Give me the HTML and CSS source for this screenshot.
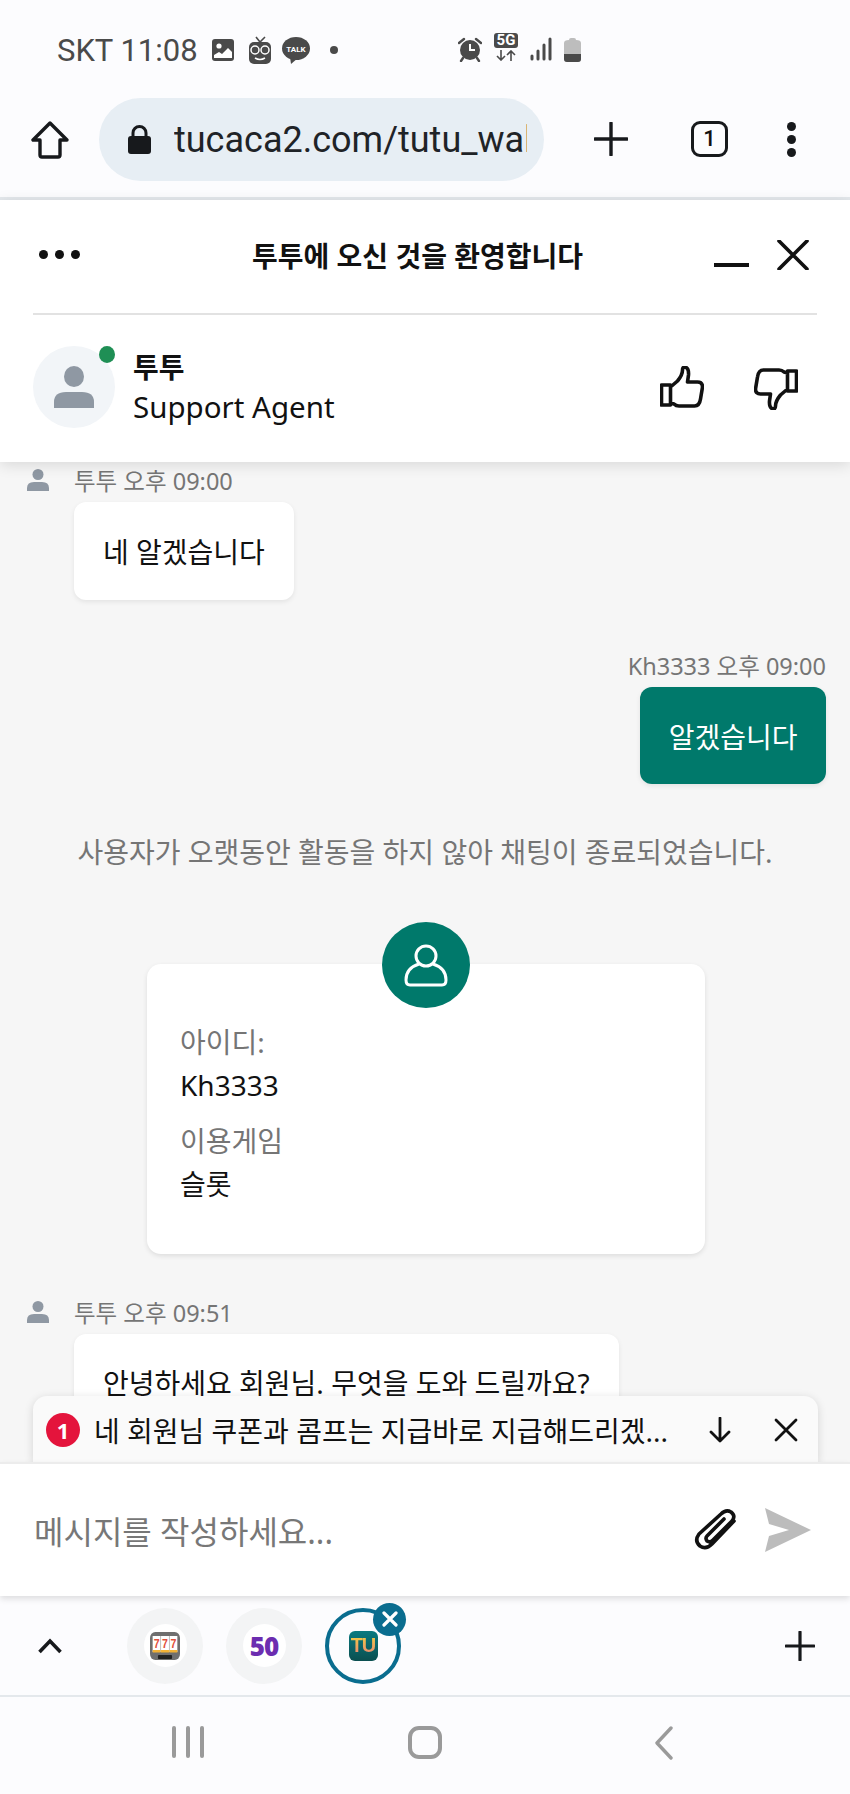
FILE: index.html
```html
<!DOCTYPE html>
<html lang="ko">
<head>
  <meta charset="UTF-8" />
  <meta name="viewport" content="width=device-width, initial-scale=1" />
  <title>투투 채팅</title>
  <link rel="stylesheet" href="styles.css">
</head>
<body>
  <div class="phone">
    <!-- status bar -->
    <div class="statusbar">
      <div class="status-left">
        <span class="clock">SKT 11:08</span>
        <svg class="st-photo" width="24" height="24" viewBox="0 0 24 24"><rect x="1" y="1" width="22" height="22" rx="3" fill="#4a4a4a"/><circle cx="8" cy="8" r="2.6" fill="#fff"/><path d="M3 20v-3l5-3 3 2 6-6 4 4v6z" fill="#fff"/></svg>
        <svg width="24" height="28" viewBox="0 0 24 28"><path d="M8 1l4 5 5-5" fill="none" stroke="#4a4a4a" stroke-width="1.6"/><rect x="1" y="6" width="22" height="22" rx="5" fill="#4a4a4a"/><circle cx="7" cy="14" r="4" fill="none" stroke="#fff" stroke-width="1.5"/><circle cx="17" cy="14" r="4" fill="none" stroke="#fff" stroke-width="1.5"/><path d="M7 22q5 3 10 0" fill="none" stroke="#fff" stroke-width="1.5"/></svg>
        <svg width="28" height="27" viewBox="0 0 28 27"><ellipse cx="14" cy="11.5" rx="14" ry="11.5" fill="#4a4a4a"/><path d="M8 20l1 7 7-6z" fill="#4a4a4a"/><text class="talk" x="14" y="15" text-anchor="middle">TALK</text></svg>
        <span class="st-dot"></span>
      </div>
      <div class="status-right">
        <svg width="24" height="25" viewBox="0 0 24 25"><path d="M1 6l5-4M23 6l-5-4" stroke="#4a4a4a" stroke-width="2.4" stroke-linecap="round"/><path d="M5 21l-2 3M19 21l2 3" stroke="#4a4a4a" stroke-width="2.4" stroke-linecap="round"/><circle cx="12" cy="13" r="10" fill="#4a4a4a"/><path d="M12 7v6h5" fill="none" stroke="#fff" stroke-width="2"/></svg>
        <div class="fiveg">
          <span class="fiveg-label">5G</span>
          <svg width="22" height="11" viewBox="0 0 22 11"><path d="M6 0v10M2 6l4 4 4-4M16 11V1M12 5l4-4 4 4" fill="none" stroke="#4a4a4a" stroke-width="1.6"/></svg>
        </div>
        <svg width="22" height="24" viewBox="0 0 22 24"><g stroke="#4a4a4a" stroke-width="3" stroke-linecap="round"><path d="M2 19v3"/><path d="M8 14v8"/><path d="M14 8v14"/><path d="M20 2v20"/></g></svg>
        <svg width="17" height="25" viewBox="0 0 17 25"><path d="M5 3q0-2 2-2h3q2 0 2 2q5 0 5 3v16q0 3-3 3H3q-3 0-3-3V6q0-3 5-3z" fill="#bdbdbd"/><path d="M0 17h17v5q0 3-3 3H3q-3 0-3-3z" fill="#4a4a4a"/></svg>
      </div>
    </div>

    <!-- browser toolbar -->
    <div class="toolbar">
      <svg class="home" width="38" height="38" viewBox="0 0 38 38"><path d="M19 2L2 19h7v15q0 2 2 2h16q2 0 2-2V19h7z" fill="none" stroke="#17191c" stroke-width="3.4" stroke-linejoin="round"/></svg>
      <div class="urlbar">
        <svg class="lock" width="23" height="29" viewBox="0 0 23 29"><path d="M5 12V8a6.5 6.5 0 0113 0v4" fill="none" stroke="#17191c" stroke-width="3"/><rect y="11" width="23" height="18" rx="3" fill="#17191c"/></svg>
        <span class="url">tucaca2.com/tutu_wal</span>
      </div>
      <svg class="tb-plus" width="34" height="34" viewBox="0 0 34 34"><path d="M17 1v32M1 17h32" stroke="#17191c" stroke-width="3.4" stroke-linecap="round"/></svg>
      <span class="tabcount">1</span>
      <span class="kebab"><i></i><i></i><i></i></span>
    </div>

    <!-- chat header -->
    <header class="chat-head">
      <div class="title-row">
        <span class="dots"><i></i><i></i><i></i></span>
        <h1 class="title">투투에 오신 것을 환영합니다</h1>
        <span class="minimize"></span>
        <svg class="close" width="32" height="30" viewBox="0 0 32 30"><path d="M2 1l28 28M30 1L2 29" stroke="#111" stroke-width="3.6" stroke-linecap="round"/></svg>
      </div>
      <div class="agent-row">
        <div class="avatar">
          <svg width="42" height="42" viewBox="0 0 42 42"><ellipse cx="21" cy="10.5" rx="10" ry="10.5" fill="#8f98a3"/><path d="M1 42v-6q0-10 12-10h16q12 0 12 10v6z" fill="#8f98a3"/></svg>
          <span class="online"></span>
        </div>
        <div class="agent-info">
          <strong>투투</strong>
          <span>Support Agent</span>
        </div>
        <svg class="thumb" width="44" height="42" viewBox="0 0 44 42"><path d="M1.500 19h9v20h-9zM10.500 21l7-6q5-6 5-11q0-3 2.500-3q4 1 3.500 8l-1 7h10q5 0 5 5l-2 12q-1 7-6 7H19q-3 0-5-2l-3.500-1" fill="none" stroke="#111" stroke-width="3.6" stroke-linejoin="round"/></svg>
        <svg class="thumb thumb-down" width="44" height="42" viewBox="0 0 44 42"><path d="M42.500 23h-9V3h9zM33.500 21l-7 6q-5 6-5 11q0 3-2.500 3q-4-1-3.500-8l1-7H6.500q-5 0-5-5l2-12q1-7 6-7H25q3 0 5 2l3.500 1" fill="none" stroke="#111" stroke-width="3.6" stroke-linejoin="round"/></svg>
      </div>
    </header>

    <!-- messages -->
    <main class="chat-body">
      <div class="msg">
        <div class="meta">
          <svg width="24" height="22" viewBox="0 0 24 22"><ellipse cx="12" cy="5.5" rx="5.5" ry="5.5" fill="#8f98a3"/><path d="M1 22v-3q0-6 7-6h8q7 0 7 6v3z" fill="#8f98a3"/></svg>
          <span>투투 오후 09:00</span>
        </div>
        <div class="bubble">네 알겠습니다</div>
      </div>

      <div class="msg msg-mine">
        <div class="meta"><span>Kh3333 오후 09:00</span></div>
        <div class="bubble">알겠습니다</div>
      </div>

      <p class="notice">사용자가 오랫동안 활동을 하지 않아 채팅이 종료되었습니다.</p>

      <section class="info-card">
        <span class="info-icon">
          <svg width="44" height="44" viewBox="0 0 44 44"><circle cx="22" cy="13" r="10" fill="none" stroke="#fff" stroke-width="3"/><path d="M15 21q-13 4-13 16q0 5 4 5h32q4 0 4-5q0-12-13-16" fill="none" stroke="#fff" stroke-width="3" stroke-linejoin="round"/></svg>
        </span>
        <dl class="info-list">
          <dt>아이디:</dt>
          <dd>Kh3333</dd>
          <dt>이용게임</dt>
          <dd>슬롯</dd>
        </dl>
      </section>

      <div class="msg msg-last">
        <div class="meta">
          <svg width="24" height="22" viewBox="0 0 24 22"><ellipse cx="12" cy="5.5" rx="5.5" ry="5.5" fill="#8f98a3"/><path d="M1 22v-3q0-6 7-6h8q7 0 7 6v3z" fill="#8f98a3"/></svg>
          <span>투투 오후 09:51</span>
        </div>
        <div class="bubble">안녕하세요 회원님. 무엇을 도와 드릴까요?</div>
      </div>

      <!-- unread strip sits over the last messages -->
      <div class="unread">
        <span class="unread-count">1</span>
        <span class="unread-text">네 회원님 쿠폰과 콤프는 지급바로 지급해드리겠...</span>
        <svg width="24" height="26" viewBox="0 0 24 26"><path d="M12 1v23M3 15l9 9 9-9" fill="none" stroke="#111" stroke-width="2.8" stroke-linecap="round" stroke-linejoin="round"/></svg>
        <svg width="24" height="24" viewBox="0 0 24 24"><path d="M2 2l20 20M22 2L2 22" stroke="#111" stroke-width="2.8" stroke-linecap="round"/></svg>
      </div>
    </main>

    <!-- message input -->
    <div class="composer">
      <span class="placeholder">메시지를 작성하세요...</span>
      <svg class="clip" width="46" height="44" viewBox="0 0 46 44"><path d="M41 13L19 36q-6 6-12 2q-6-5-1-12L28 6q5-5 10-2q5 4 1 9L20 32q-3 3-6 1q-2-3 0-5l17-17" fill="none" stroke="#111" stroke-width="3.6" stroke-linecap="round" stroke-linejoin="round"/></svg>
      <svg class="send" width="48" height="44" viewBox="0 0 48 44"><path d="M2 0l46 22L2 44l4-16 20-6L6 16z" fill="#bcbcbc"/></svg>
    </div>

    <!-- open tabs strip -->
    <div class="tabstrip">
      <svg class="chev" width="26" height="16" viewBox="0 0 26 16"><path d="M2.500 14L13 3l10.500 11" fill="none" stroke="#17191c" stroke-width="3.6"/></svg>
      <div class="tab-list">
        <div class="tab">
          <span class="tab-inner">
            <svg width="30" height="28" viewBox="0 0 34 28" preserveAspectRatio="none"><rect width="34" height="28" rx="6" fill="#6f6f6f"/><rect x="3" y="4" width="9" height="16" fill="#fff"/><rect x="12.5" y="4" width="9" height="16" fill="#fff"/><rect x="22" y="4" width="9" height="16" fill="#fff"/><text class="sevens" x="7.5" y="16" text-anchor="middle">7</text><text class="sevens" x="17" y="16" text-anchor="middle">7</text><text class="sevens" x="26.5" y="16" text-anchor="middle">7</text><rect x="3" y="18" width="9" height="2.5" fill="#f2b134"/><rect x="12.5" y="18" width="9" height="2.5" fill="#f2b134"/><rect x="22" y="18" width="9" height="2.5" fill="#f2b134"/><rect x="9" y="23" width="16" height="4" rx="1" fill="#222"/></svg>
          </span>
        </div>
        <div class="tab">
          <span class="tab-inner"><span class="fifty">50</span></span>
        </div>
        <div class="tab tab-active">
          <span class="tu-logo"><span class="tu-text">TU</span></span>
          <span class="tab-close">
            <svg width="16" height="16" viewBox="0 0 16 16"><path d="M2 2l12 12M14 2L2 14" stroke="#fff" stroke-width="3.2" stroke-linecap="round"/></svg>
          </span>
        </div>
      </div>
      <svg class="tab-add" width="30" height="30" viewBox="0 0 30 30"><path d="M15 1v28M1 15h28" stroke="#17191c" stroke-width="3.2" stroke-linecap="round"/></svg>
    </div>

    <!-- android nav buttons -->
    <nav class="navbar">
      <span class="nav-recent"><i></i><i></i><i></i></span>
      <span class="nav-home"></span>
      <svg width="20" height="34" viewBox="0 0 20 34"><path d="M17 2L3 17l14 15" fill="none" stroke="#9a9a9a" stroke-width="3.4" stroke-linecap="round" stroke-linejoin="round"/></svg>
    </nav>
  </div>
</body>
</html>
```

FILE: styles.css
```css
* {
  box-sizing: border-box;
}
html, body {
  margin: 0;
  padding: 0;
}
body {
  font-family: "Noto Sans", "Noto Sans CJK KR", sans-serif;
  background: #fcfcfe;
  color: #111;
}
.phone {
  width: 850px;
  height: 1794px;
  display: flex;
  flex-direction: column;
  overflow: hidden;
}

/* status bar */
.statusbar {
  height: 98px;
  flex: none;
  display: flex;
  align-items: flex-start;
  padding: 33px 0 0 57px;
  background: #fcfcfe;
  font-family: Roboto, sans-serif;
  color: #4a4a4a;
}
.status-left {
  flex: 0 0 401px;
  display: flex;
  align-items: center;
  height: 34px;
  gap: 10px;
}
.clock {
  font-size: 31px;
  margin-right: 3px;
}
.st-photo {
  margin-right: 3px;
}
.talk {
  fill: #fff;
  font-size: 8px;
  font-weight: 700;
}
.st-dot {
  width: 8px;
  height: 8px;
  border-radius: 50%;
  background: #4a4a4a;
  margin-left: 10px;
}
.status-right {
  display: flex;
  align-items: center;
  height: 34px;
  gap: 12px;
  margin-top: -1px;
}
.fiveg {
  display: flex;
  flex-direction: column;
  align-items: center;
  gap: 2px;
  margin-top: -5px;
}
.fiveg-label {
  width: 24px;
  height: 15px;
  border-radius: 3px;
  background: #4a4a4a;
  color: #fff;
  font-size: 15px;
  font-weight: 700;
  line-height: 15px;
  text-align: center;
}

/* browser toolbar */
.toolbar {
  height: 102px;
  flex: none;
  display: flex;
  align-items: flex-start;
  background: #fcfcfe;
  border-bottom: 3px solid #e4e8ec;
}
.home {
  margin: 23px 0 0 31px;
}
.urlbar {
  width: 445px;
  height: 83px;
  flex: none;
  margin-left: 30px;
  padding: 0 17px 0 29px;
  border-radius: 42px;
  background: #e7eef4;
  display: flex;
  align-items: center;
  gap: 23px;
}
.lock {
  flex: none;
}
.url {
  font-family: Roboto, sans-serif;
  font-size: 36px;
  color: #1f2327;
  white-space: nowrap;
  overflow: hidden;
}
.tb-plus {
  margin: 24px 0 0 50px;
}
.tabcount {
  width: 37px;
  height: 36px;
  margin: 23px 0 0 63px;
  border: 3.5px solid #17191c;
  border-radius: 9px;
  font-family: Roboto, sans-serif;
  font-size: 22px;
  font-weight: 500;
  line-height: 29px;
  text-align: center;
}
.kebab {
  display: flex;
  flex-direction: column;
  gap: 4px;
  margin: 24px 0 0 59px;
}
.kebab i {
  width: 9px;
  height: 9px;
  border-radius: 50%;
  background: #17191c;
}

/* chat header */
.chat-head {
  height: 262px;
  flex: none;
  position: relative;
  z-index: 2;
  background: #fff;
  box-shadow: 0 3px 14px rgba(0, 0, 0, 0.12);
  padding: 0 33px;
}
.title-row {
  height: 115px;
  display: flex;
  align-items: center;
  border-bottom: 2px solid #e2e2e2;
  padding-bottom: 4px;
}
.dots {
  display: flex;
  gap: 7px;
  margin-left: 6px;
  margin-right: 5px;
}
.dots i {
  width: 9px;
  height: 9px;
  border-radius: 50%;
  background: #111;
}
.title {
  flex: 1;
  margin: 0;
  font-size: 28px;
  font-weight: 700;
  text-align: center;
  padding-left: 36px;
}
.minimize {
  width: 35px;
  height: 4px;
  background: #111;
  margin: 20px 28px 0 0;
}
.close {
  margin-right: 8px;
}
.agent-row {
  display: flex;
  align-items: center;
  padding-top: 31px;
}
.avatar {
  width: 82px;
  height: 82px;
  border-radius: 50%;
  background: #f2f5f8;
  position: relative;
  display: flex;
  align-items: center;
  justify-content: center;
}
.online {
  position: absolute;
  top: 0;
  right: 0;
  width: 16px;
  height: 17px;
  border-radius: 50%;
  background: #1f8f55;
}
.agent-info {
  flex: 1;
  margin-left: 18px;
  display: flex;
  flex-direction: column;
  font-size: 29.5px;
  line-height: 40px;
}
.agent-info strong {
  font-size: 28px;
}
.thumb {
  margin-right: 50px;
}
.thumb-down {
  margin-right: 19px;
  margin-top: 4px;
}

/* messages */
.chat-body {
  flex: 1;
  position: relative;
  overflow: hidden;
  background: #f6f6f6;
  padding: 0 24px;
}
.msg {
  display: flex;
  flex-direction: column;
  align-items: flex-start;
}
.msg-mine {
  align-items: flex-end;
  margin-top: 45px;
}
.meta {
  display: flex;
  align-items: center;
  gap: 24px;
  height: 36px;
  font-size: 23.5px;
  color: #757575;
}
.meta svg {
  margin-left: 2px;
}
.msg-mine .meta {
  height: 40px;
}
.bubble {
  margin: 4px 0 0 50px;
  min-height: 98px;
  padding: 0 29px;
  display: flex;
  align-items: center;
  background: #fff;
  border-radius: 12px;
  box-shadow: 0 2px 5px rgba(0, 0, 0, 0.08);
  font-size: 28px;
}
.msg-mine .bubble {
  margin: 2px 0 0;
  min-height: 97px;
  padding: 0 28.5px;
  background: #00796b;
  color: #fff;
}
.notice {
  margin: 47px 0 0;
  font-size: 28px;
  line-height: 42px;
  color: #757575;
  text-align: center;
}
.info-card {
  position: relative;
  width: 558px;
  height: 290px;
  margin: 91px 0 0 123px;
  padding: 57px 33px 0;
  background: #fff;
  border-radius: 14px;
  box-shadow: 0 2px 5px rgba(0, 0, 0, 0.1);
}
.info-icon {
  position: absolute;
  top: -42px;
  left: 235px;
  width: 88px;
  height: 86px;
  border-radius: 50%;
  background: #00796b;
  display: flex;
  align-items: center;
  justify-content: center;
}
.info-list {
  margin: 0;
  font-size: 28px;
  line-height: 43px;
}
.info-list dt {
  color: #757575;
}
.info-list dd {
  margin: 0 0 13px;
  color: #111;
}
.msg-last {
  margin-top: 40px;
}
.msg-last .bubble {
  align-items: flex-start;
  padding-top: 28px;
  min-height: 140px;
}
.unread {
  position: absolute;
  left: 33px;
  right: 32px;
  top: 934px;
  height: 66px;
  display: flex;
  align-items: center;
  padding: 1px 20px 0 13px;
  background: #fafafa;
  border-radius: 14px 14px 0 0;
  box-shadow: 0 2px 10px rgba(0, 0, 0, 0.14);
}
.unread-count {
  width: 34px;
  height: 34px;
  flex: none;
  border-radius: 50%;
  background: #e4143c;
  color: #fff;
  font-size: 22px;
  font-weight: 700;
  line-height: 34px;
  text-align: center;
}
.unread-text {
  flex: 1;
  margin-left: 14px;
  font-size: 28px;
  white-space: nowrap;
}
.unread svg:last-child {
  margin-left: 42px;
}

/* message input */
.composer {
  height: 134px;
  flex: none;
  position: relative;
  z-index: 1;
  display: flex;
  align-items: center;
  background: #fff;
  border-top: 2px solid #ececec;
  box-shadow: 0 3px 6px rgba(0, 0, 0, 0.12);
  padding: 0 39px 0 34px;
}
.placeholder {
  flex: 1;
  font-size: 32px;
  color: #777;
}
.clip {
  margin-right: 24px;
}

/* open tabs strip */
.tabstrip {
  height: 101px;
  flex: none;
  display: flex;
  align-items: center;
  background: #fcfcfe;
  border-bottom: 2px solid #e4e8ec;
  padding: 0 35px 0 37px;
}
.tab-list {
  flex: 1;
  display: flex;
  gap: 23px;
  margin-left: 64px;
}
.tab {
  width: 76px;
  height: 76px;
  border-radius: 50%;
  background: #f3f4f5;
  display: flex;
  align-items: center;
  justify-content: center;
  position: relative;
}
.tab-inner {
  width: 43px;
  height: 43px;
  border-radius: 50%;
  background: #fff;
  display: flex;
  align-items: center;
  justify-content: center;
}
.sevens {
  font-family: "Liberation Sans", sans-serif;
  font-size: 12px;
  font-weight: 700;
  fill: #e2503c;
}
.fifty {
  font-family: "Open Sans", sans-serif;
  font-size: 26px;
  font-weight: 800;
  letter-spacing: -1px;
  color: #6c2db0;
}
.tab-active {
  background: none;
  border: 4px solid #0a6d8f;
}
.tu-logo {
  width: 29px;
  height: 30px;
  border-radius: 6px;
  background: linear-gradient(#0a7a80, #0b4f50);
  display: flex;
  align-items: center;
  justify-content: center;
}
.tu-text {
  background: linear-gradient(#f4d13d, #e8807a);
  -webkit-background-clip: text;
  background-clip: text;
  color: transparent;
  font-family: "Liberation Sans", sans-serif;
  font-size: 20px;
  font-weight: 700;
  letter-spacing: -1px;
}
.tab-close {
  position: absolute;
  top: -9px;
  right: -9px;
  width: 33px;
  height: 33px;
  border-radius: 50%;
  background: #0a6d8f;
  display: flex;
  align-items: center;
  justify-content: center;
}

/* android nav buttons */
.navbar {
  height: 97px;
  flex: none;
  display: flex;
  align-items: flex-start;
  padding: 29px 0 0 172px;
  background: #fcfcfe;
}
.nav-recent {
  display: flex;
  gap: 10px;
  width: 236px;
}
.nav-recent i {
  width: 4px;
  height: 32px;
  background: #9a9a9a;
  border-radius: 2px;
}
.nav-home {
  width: 34px;
  height: 33px;
  border: 4px solid #9a9a9a;
  border-radius: 11px;
  margin-right: 212px;
}
```
